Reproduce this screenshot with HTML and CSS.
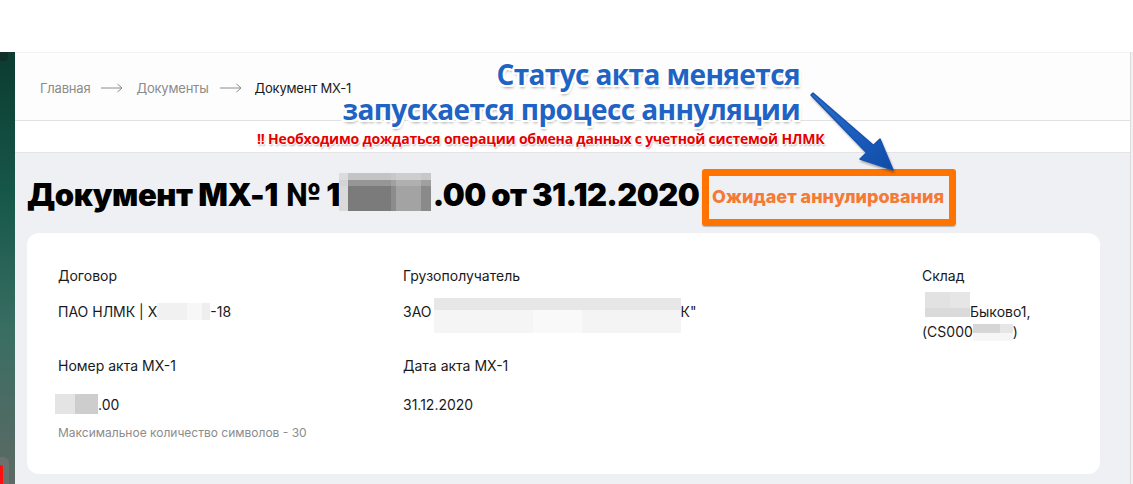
FILE: index.html
```html
<!DOCTYPE html>
<html lang="ru">
<head>
<meta charset="utf-8">
<link rel="stylesheet" href="styles.css">
</head>
<body>
<div class="screen">
  <div class="topgap"></div>
  <div class="frame">
    <aside class="side">
      <div class="side-corner"></div>
      <div class="side-red"></div>
    </aside>
    <main class="main">
      <header class="head">
        <nav class="crumbs">
          <span class="crumb">Главная</span>
          <span class="arr"><svg width="22" height="10" viewBox="0 0 22 10"><path d="M0 5H21M16.5 1L21 5L16.5 9" fill="none" stroke="#8c8c8c" stroke-width="1"/></svg></span>
          <span class="crumb">Документы</span>
          <span class="arr"><svg width="22" height="10" viewBox="0 0 22 10"><path d="M0 5H21M16.5 1L21 5L16.5 9" fill="none" stroke="#8c8c8c" stroke-width="1"/></svg></span>
          <span class="crumb current">Документ МХ-1</span>
        </nav>
      </header>
      <div class="band"></div>
      <section class="content">
        <div class="title-row">
          <h1 class="title">Документ МХ-1 <span class="num-sign">№</span> 1<span class="blur-t"></span><span class="title-tail">.00 от 31.12.2020</span></h1>
          <div class="status">Ожидает аннулирования</div>
        </div>
        <div class="card">
          <div class="col col1">
            <div class="field">
              <div class="label">Договор</div>
              <div class="value">ПАО НЛМК | Х<span class="blur blur-dog"></span>-18</div>
            </div>
            <div class="field">
              <div class="label">Номер акта МХ-1</div>
              <div class="value"><span class="blur blur-num"></span>.00</div>
              <div class="hint">Максимальное количество символов - 30</div>
            </div>
          </div>
          <div class="col col2">
            <div class="field">
              <div class="label">Грузополучатель</div>
              <div class="value">ЗАО<span class="blur blur-zao"></span>К"</div>
            </div>
            <div class="field">
              <div class="label">Дата акта МХ-1</div>
              <div class="value">31.12.2020</div>
            </div>
          </div>
          <div class="col col3">
            <div class="field">
              <div class="label">Склад</div>
              <div class="value"><span class="blur blur-sk1"></span>Быково1,<br>(CS000<span class="blur blur-sk2"></span>)</div>
            </div>
          </div>
        </div>
      </section>
    </main>
    <div class="scroll"></div>
  </div>

  <div class="note">
    <div class="note-blue">Статус акта меняется<br>запускается процесс аннуляции</div>
    <div class="note-red">!! Необходимо дождаться операции обмена данных с учетной системой НЛМК</div>
    <svg class="note-arrow" width="1133" height="484" viewBox="0 0 1133 484">
      <defs>
        <linearGradient id="ag" x1="0" y1="0" x2="1" y2="1">
          <stop offset="0" stop-color="#2a6fd0"/>
          <stop offset="1" stop-color="#0f4ca8"/>
        </linearGradient>
      </defs>
      <polygon points="813,93 873.4,145.3 880,139 893,170 860,159 866.6,152.7 811,95" fill="url(#ag)" stroke="#1752b0" stroke-width="1.5" stroke-linejoin="round"/>
    </svg>
  </div>
</div>
</body>
</html>
```

FILE: styles.css
```css
* { box-sizing: border-box; }
html, body { margin: 0; padding: 0; }
body {
  width: 1133px;
  height: 484px;
  overflow: hidden;
  background: #fff;
  font-family: "Inter", "Noto Sans", sans-serif;
  color: #1a1a1a;
}
.screen { position: relative; width: 1133px; height: 484px; }
.topgap { height: 52px; background: #fff; }
.frame { display: flex; height: 432px; }
.side {
  width: 15px;
  flex-shrink: 0;
  position: relative;
  background: linear-gradient(180deg, #0c3b31 0%, #17594b 35%, #3a6e63 65%, #5d6964 100%);
}
.side-corner {
  position: absolute; left: 0; top: 0; width: 8px; height: 9px;
  background: #0f2f29; border-radius: 0 0 4px 0;
}
.side-red {
  position: absolute; left: 0; bottom: 0; width: 9px; height: 27px;
  background: #6b716e; border-radius: 0 6px 0 0;
}
.side-red::after {
  content: ""; position: absolute; left: 0; top: 8px; width: 3px; height: 19px; background: #ff1010; border-radius: 0 2px 0 0;
}
.main { flex: 1; min-width: 0; display: flex; flex-direction: column; background: #eff0f4; }
.scroll { width: 3px; flex-shrink: 0; background: #f1f1f3; border-left: 1px solid #dcdcdc; }
.head {
  height: 69px;
  flex-shrink: 0;
  background: #fdfdfd;
  border-top: 1px solid #f3f3f3;
  border-bottom: 1px solid #e2e2e4;
  display: flex;
  align-items: center;
  padding-left: 25px;
  padding-top: 2px;
}
.crumbs { display: flex; align-items: center; font-size: 13px; letter-spacing: -0.2px; }
.crumb { color: #8b8b8b; }
.crumb.current { color: #1a1a1a; }
.arr { display: flex; margin: 0 13px 0 11px; }
.arr svg { display: block; }
.band { height: 32px; flex-shrink: 0; background: #fff; border-bottom: 1px solid #e4e4e6; }
.content { padding: 0 30px 0 12px; }
.title-row { display: flex; align-items: center; height: 80px; padding-top: 2px; }
.title {
  margin: 0;
  font-family: "Inter", sans-serif;
  font-weight: 900;
  font-size: 31px;
  letter-spacing: -0.45px;
  color: #000;
  white-space: nowrap;
}
.num-sign { margin-left: 3px; }
.title-tail { letter-spacing: -0.6px; }
.blur-t {
  display: inline-block;
  width: 92px;
  height: 38px;
  vertical-align: -5px;
  margin: -4px 2px 0 -1px;
  background:
    linear-gradient(180deg, rgba(220,220,220,0.75) 0 7px, rgba(200,200,200,0.35) 7px 13px, transparent 13px),
    linear-gradient(90deg, #dadada 0 9px, #7b7b7b 9px 52px, #8c8c8c 52px 57px, #a3a3a3 57px 82px, #8a8a8a 82px 100%);
}
.status {
  margin-left: 3px;
  margin-top: 6px;
  border: 7px solid #ff7300;
  border-radius: 3px;
  padding: 10px 5px 11px 3px;
  box-shadow: 0 1px 1px rgba(0,0,0,0.25);
  font-weight: 800;
  font-size: 18px;
  line-height: 22px;
  color: #f47a35;
  white-space: nowrap;
}
.card {
  background: #fff;
  border-radius: 12px;
  height: 241px;
  display: flex;
  padding: 33px 30px 0 31px;
}
.col { display: flex; flex-direction: column; gap: 34px; flex-shrink: 0; }
.col1 { width: 345px; }
.col2 { width: 519px; }
.col3 { width: 140px; }
.field { display: flex; flex-direction: column; }
.label { font-size: 14px; line-height: 20px; color: #1a1a1a; }
.value { font-size: 14px; line-height: 20px; margin-top: 16px; color: #1a1a1a; white-space: nowrap; }
.field + .field .value { margin-top: 19px; }
.hint { font-size: 12px; color: #8c8c8c; margin-top: 10px; }

.blur { display: inline-block; position: relative; height: 20px; vertical-align: top; }
.blur::before { content: ""; position: absolute; left: 0; right: 0; }
.blur-dog { width: 53px; }
.blur-dog::before { top: 1px; bottom: 2px; background: linear-gradient(90deg, #f1f1f1 0 30px, #f7f7f7 30px 45px, #eeeeee 45px); }
.blur-num { width: 43px; margin-left: -3px; }
.blur-num::before { top: -1px; bottom: 1px; background: linear-gradient(90deg, #e4e4e4 0 20px, #cdcdcd 20px 100%); }
.blur-zao { width: 247px; margin-left: 2px; }
.blur-zao::before { top: -4px; bottom: -11px; background:
  linear-gradient(180deg, #e7e7e7 0 12px, transparent 12px),
  linear-gradient(90deg, #f5f5f5 0 40%, #f9f9f9 40% 60%, #f4f4f4 60% 100%); }
.blur-sk1 { width: 45px; margin-left: 3px; }
.blur-sk1::before { top: -10px; bottom: 5px; background:
  linear-gradient(180deg, transparent 0 16px, #dadada 16px),
  linear-gradient(90deg, #e2e2e2 0 25px, #e6e6e6 25px 100%); }
.blur-sk2 { width: 40px; }
.blur-sk2::before { top: 2px; bottom: 1px; background:
  linear-gradient(180deg, transparent 0 9px, #f6f6f6 9px),
  linear-gradient(90deg, #d6d6d6 0 27px, #e6e6e6 27px 100%); }

.note { position: absolute; inset: 0; pointer-events: none; }
.note-blue {
  position: absolute;
  right: 333px;
  top: 57px;
  text-align: right;
  font-family: "Open Sans", sans-serif;
  font-weight: 700;
  font-size: 28px;
  line-height: 35px;
  color: #1f63c4;
  letter-spacing: -0.6px;
  text-shadow: -2px 0 0 #fff, 2px 0 0 #fff, 0 -2px 0 #fff, 0 2px 0 #fff, -2px -2px 0 #fff, 2px 2px 0 #fff, -2px 2px 0 #fff, 2px -2px 0 #fff, 1px 3px 3px rgba(0,0,0,0.35);
}
.note-red {
  position: absolute;
  left: 257px;
  top: 129px;
  font-family: "Open Sans", sans-serif;
  font-weight: 700;
  font-size: 14px;
  color: #e60000;
  letter-spacing: -0.2px;
  text-shadow: -1px 0 0 #fff, 1px 0 0 #fff, 0 -1px 0 #fff, 0 1px 0 #fff, 1px 2px 2px rgba(0,0,0,0.3);
}
.note-arrow { position: absolute; left: 0; top: 0; filter: drop-shadow(1px 2px 1px rgba(0,0,0,0.3)); }
```
